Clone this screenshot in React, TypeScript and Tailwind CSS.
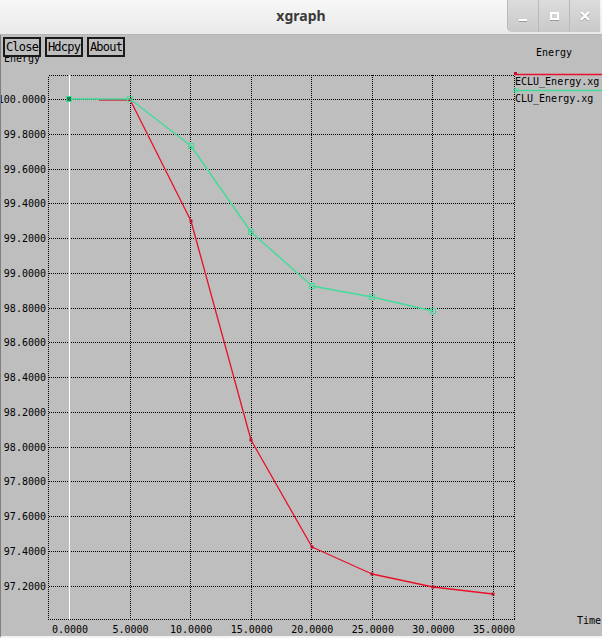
import React from 'react';

const mono = { fontFamily: '"DejaVu Sans Mono", "Liberation Mono", monospace' };

// pixel grid of the xgraph canvas (page coordinates)
const xTicks = [0, 5, 10, 15, 20, 25, 30, 35];
const xPix = (t: number) => 68 + (t * (492 - 68)) / 35;
const yVals = Array.from({ length: 15 }, (_, k) => 100 - k * 0.2);
const yPix = (k: number) => 99 + k * 34.75;
const crisp = (v: number) => Math.round(v) + 0.5;

const red = [
  [129, 99.5],
  [190, 221],
  [250, 440],
  [311, 547],
  [371, 574],
  [432, 587],
  [492, 594],
];
const green = [
  [68, 99],
  [129, 99],
  [190, 146],
  [250, 232],
  [311, 286],
  [371, 297],
  [432, 311],
];

const pts = (a: number[][]) => a.map(([x, y]) => `${x},${y}`).join(' ');

function WinButton({ children, first }: { children: React.ReactNode; first?: boolean }) {
  return (
    <div
      className={`flex h-[32px] w-[31px] items-center justify-center border-l border-[#b9b9b9] bg-gradient-to-b from-[#dcdcdc] to-[#c9c9c9] ${
        first ? 'rounded-bl-[5px]' : ''
      }`}
    >
      {children}
    </div>
  );
}

function XButton({ label }: { label: string }) {
  return (
    <div
      className="flex h-[20px] w-[38px] items-center justify-center border-2 border-[#1a1a1a] bg-[#bebebe] text-[12px] leading-none text-black tracking-[-0.8px]"
      style={mono}
    >
      {label}
    </div>
  );
}

export default function App() {
  return (
    <div className="flex h-[638px] w-[602px] flex-col overflow-hidden bg-[#bebebe]">
      {/* Title bar */}
      <div className="flex h-[35px] shrink-0 border-b border-[#b5b5b5] bg-gradient-to-b from-[#f7f7f7] to-[#e9e9e9]">
        <div className="w-[95px]" />
        <div
          className="flex flex-1 items-center justify-center pb-[3px] text-[14px] font-bold text-[#3a3a3a]"
          style={{ fontFamily: '"Noto Sans", "DejaVu Sans", sans-serif' }}
        >
          xgraph
        </div>
        <div className="flex w-[95px] items-start">
          <WinButton first>
            <div className="mt-[8px] h-[2px] w-[8px] bg-white shadow-[0_1px_0_#9a9a9a]" />
          </WinButton>
          <WinButton>
            <div className="h-[8px] w-[9px] border-2 border-white shadow-[0_1px_0_#9a9a9a]" />
          </WinButton>
          <WinButton>
            <svg width="10" height="10" viewBox="0 0 10 10">
              <path d="M1 1 L9 9 M9 1 L1 9" stroke="#9a9a9a" strokeWidth="2.2" transform="translate(0 1)" />
              <path d="M1 1 L9 9 M9 1 L1 9" stroke="#ffffff" strokeWidth="2.2" />
            </svg>
          </WinButton>
        </div>
      </div>

      {/* Canvas */}
      <div className="relative flex-1 border-l border-[#808080] border-b-2 border-b-[#f4f4f4]">
        <svg width="601" height="601" viewBox="0 35 601 601" className="block" style={mono}>
          {/* grid */}
          <g stroke="#000" strokeWidth="1" strokeDasharray="1 1" shapeRendering="crispEdges">
            {xTicks.map((t) => (
              <line key={t} x1={crisp(xPix(t))} y1={75} x2={crisp(xPix(t))} y2={620} />
            ))}
            {yVals.map((_, k) => (
              <line key={k} x1={48} y1={crisp(yPix(k))} x2={514} y2={crisp(yPix(k))} />
            ))}
            <rect x={47.5} y={75.5} width={466} height={544} fill="none" />
          </g>
          {/* zero axis */}
          <line x1={68.5} y1={75} x2={68.5} y2={620} stroke="#fff" strokeWidth="1" shapeRendering="crispEdges" />

          {/* y labels */}
          <g fontSize="10" fill="#000" textAnchor="end">
            {yVals.map((v, k) => (
              <text key={k} x={45} y={yPix(k) + 4}>
                {v.toFixed(4)}
              </text>
            ))}
          </g>
          {/* x labels */}
          <g fontSize="10" fill="#000" textAnchor="middle">
            {xTicks.map((t) => (
              <text key={t} x={xPix(t) + 1} y={633}>
                {t.toFixed(4)}
              </text>
            ))}
          </g>

          {/* axis titles */}
          <g fontSize="10" fill="#000">
            <text x={3} y={62}>Energy</text>
            <text x={535} y={56}>Energy</text>
            <text x={576} y={624}>Time</text>
          </g>

          {/* legend */}
          <line x1={514} y1={74.5} x2={602} y2={74.5} stroke="#e8102a" strokeWidth="1.3" />
          <rect x={513} y={72} width={3} height={3} fill="#c0102a" />
          <text x={514} y={85} fontSize="10" fill="#000">ECLU_Energy.xg</text>
          <line x1={514} y1={90.5} x2={602} y2={90.5} stroke="#40dc98" strokeWidth="1.3" />
          <rect x={513} y={89} width={3} height={3} fill="none" stroke="#40dc98" />
          <text x={514} y={102} fontSize="10" fill="#000">CLU_Energy.xg</text>

          {/* ECLU series */}
          <line x1={98} y1={100} x2={129} y2={100} stroke="#e01030" strokeWidth="1.3" />
          <polyline points={pts(red)} fill="none" stroke="#e8102a" strokeWidth="1.3" strokeLinejoin="round" />
          {red.map(([x, y]) => (
            <rect key={x} x={x - 1.5} y={y - 1.5} width={3} height={3} fill="#c0102a" />
          ))}

          {/* CLU series */}
          <polyline points={pts(green)} fill="none" stroke="#40dc98" strokeWidth="1.4" strokeLinejoin="round" />
          {green.map(([x, y], i) => (
            <rect
              key={x}
              x={x - 2.5}
              y={y - 2.5}
              width={5}
              height={5}
              fill={i === 0 ? '#2a7a50' : 'none'}
              stroke="#40dc98"
              strokeWidth="1"
            />
          ))}
        </svg>

        {/* command buttons laid over the canvas */}
        <div className="absolute left-[2px] top-[2px] flex gap-[4px]">
          <XButton label="Close" />
          <XButton label="Hdcpy" />
          <XButton label="About" />
        </div>
      </div>
    </div>
  );
}
